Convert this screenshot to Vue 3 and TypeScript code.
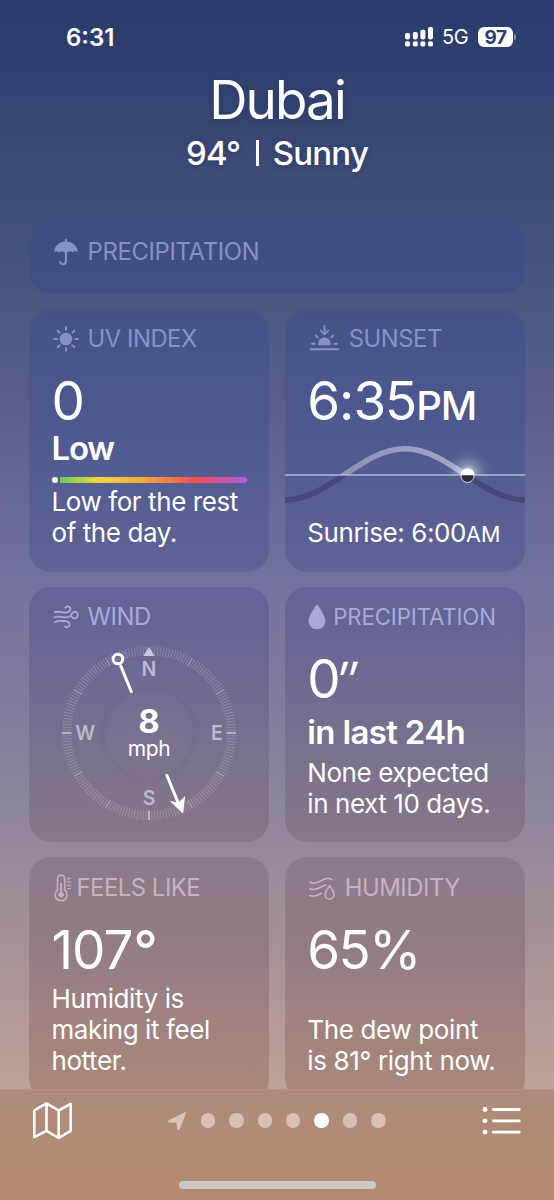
<script setup lang="ts">
interface Tick {
  angle: number
  kind: 'minor' | 'major' | 'cardinal'
}

const ticks: Tick[] = Array.from({ length: 180 }, (_, i) => {
  const angle = i * 2
  if (angle % 90 === 0) return { angle, kind: 'cardinal' as const }
  return { angle, kind: angle % 30 === 0 ? ('major' as const) : ('minor' as const) }
}).filter((t) => t.angle !== 0)

const pages = [0, 1, 2, 3, 4, 5, 6]
const activePage = 4
</script>

<template>
  <div class="screen">
    <main class="scroll">
      <div class="status">
        <span class="time">6:31</span>
        <div class="indicators">
          <svg class="signal" width="29" height="20" viewBox="0 0 29 20" fill="#fff">
            <rect x="0" y="6" width="5" height="6.4" rx="1.8" />
            <rect x="7.8" y="5" width="5" height="7.4" rx="1.8" />
            <rect x="15.4" y="2.7" width="5" height="9.7" rx="1.8" />
            <rect x="23" y="0" width="5" height="12.4" rx="1.8" />
            <rect x="0" y="14.2" width="5" height="5.3" rx="1.8" />
            <rect x="7.8" y="14.2" width="5" height="5.3" rx="1.8" />
            <rect x="15.4" y="14.2" width="5" height="5.3" rx="1.8" />
            <rect x="23" y="14.2" width="5" height="5.3" rx="1.8" />
          </svg>
          <span class="network">5G</span>
          <span class="battery">97</span>
          <span class="cap"></span>
        </div>
      </div>

      <header class="hero">
        <h1>Dubai</h1>
        <p><span class="deg">94°</span><i class="bar"></i><span class="cond">Sunny</span></p>
      </header>

      <div class="cards">
        <section class="card wide">
          <h2 class="label l-precip">
            <svg class="icon" width="26" height="28" viewBox="0 0 26 28">
              <path d="M1 14.6C1 8 6 3.4 12.9 3.4S24.8 8 24.8 14.6c-1.2-1.5-3.7-1.9-5.2-.2-1.4-1.4-3.7-1.4-5 0h-3.4c-1.3-1.4-3.6-1.4-5 0-1.500-1.700-4-1.300-5.200.2z" fill="currentColor" />
              <path d="M12.900 3.500V1.800M12.900 12v11.300c0 4-5.600 4-5.600.4" fill="none" stroke="currentColor" stroke-width="2" stroke-linecap="round" />
            </svg>
            <span>PRECIPITATION</span>
          </h2>
        </section>

        <section class="card">
          <h2 class="label l-uv">
            <svg class="icon" width="26" height="26" viewBox="0 0 26 26">
              <circle cx="13" cy="13" r="6.300" fill="currentColor" />
              <path d="M13 1.200v2.600M13 22.200v2.600M1.200 13h2.600M22.200 13h2.600M4.700 4.700l1.900 1.900M19.400 19.400l1.900 1.900M4.700 21.300l1.900-1.900M19.400 6.600l1.900-1.900" stroke="currentColor" stroke-width="2" stroke-linecap="round" />
            </svg>
            <span>UV INDEX</span>
          </h2>
          <div class="value">0</div>
          <div class="strong s-low">Low</div>
          <div class="uv"><i class="uv-dot"></i><i class="uv-bar"></i></div>
          <p class="body b-uv">Low for the rest<br />of the day.</p>
        </section>

        <section class="card">
          <h2 class="label l-sunset">
            <svg class="icon" width="31" height="28" viewBox="0 0 31 28">
              <path d="M9.400 22.200v-1.600a6.100 6.100 0 0 1 12.200 0v1.600z" fill="currentColor" />
              <path d="M1.500 26.200h28M3 20.800h2.600M25.400 20.800H28M6.800 12.500l1.900 1.900M24.200 12.500l-1.900 1.900M15.500 3v7.800M11.800 7.600l3.700 3.700 3.700-3.700" fill="none" stroke="currentColor" stroke-width="1.900" stroke-linecap="round" stroke-linejoin="round" />
            </svg>
            <span>SUNSET</span>
          </h2>
          <div class="value v-time">6:35<small>PM</small></div>
          <svg class="arc" width="240.250" height="80" viewBox="0 0 240.250 80">
            <defs>
              <clipPath id="day"><rect x="0" y="0" width="183" height="45" /></clipPath>
              <clipPath id="night"><rect x="0" y="45" width="241" height="35" /></clipPath>
              <radialGradient id="glow">
                <stop offset="0" stop-color="#fff" stop-opacity=".8" />
                <stop offset=".4" stop-color="#fff" stop-opacity=".26" />
                <stop offset=".7" stop-color="#fff" stop-opacity=".07" />
                <stop offset="1" stop-color="#fff" stop-opacity="0" />
              </radialGradient>
              <clipPath id="above"><rect x="140" y="0" width="90" height="45" /></clipPath>
              <linearGradient id="dayfill" x1="0" x2="1" y1="0" y2="0">
                <stop offset="0" stop-color="#fff" stop-opacity=".25" />
                <stop offset=".5" stop-color="#fff" stop-opacity=".42" />
                <stop offset="1" stop-color="#fff" stop-opacity=".5" />
              </linearGradient>
            </defs>
            <path class="curve" d="M0 70C43.700 70 76.300 18.800 120 18.800S196.500 70 240.300 70" stroke="#3c3f6e" stroke-opacity=".65" clip-path="url(#night)" />
            <path class="curve" d="M0 70C43.700 70 76.300 18.800 120 18.800S196.500 70 240.300 70" stroke="url(#dayfill)" clip-path="url(#day)" />
            <circle cx="183" cy="43" r="23" fill="url(#glow)" clip-path="url(#above)" />
            <path d="M0 45h241" stroke="#c3c5e2" stroke-opacity=".85" stroke-width="1.300" />
            <circle cx="182.500" cy="46" r="6.500" fill="#2c2c33" stroke="#d9d9e6" stroke-width="1" />
            <path d="M175.500 45.300a7 7 0 0 1 14 0z" fill="#fff" />
          </svg>
          <p class="body b-sunrise">Sunrise: 6:00<small>AM</small></p>
        </section>

        <section class="card">
          <h2 class="label l-wind">
            <svg class="icon" width="26" height="24" viewBox="0 0 26 24" fill="none" stroke="currentColor" stroke-width="1.800" stroke-linecap="round">
              <path d="M1.800 7.300c4-1.800 7.500.8 11.300.3 3.400-.5 4.700-2.300 4.200-4.300-.6-2.400-4-2.600-5-.6" />
              <path d="M1.500 12.200c4-1.900 7 .6 11.600.1 3.400-.4 4.900-1.300 5.400-2.900.8-2.300 3.200-3.300 5-2.100 2.200 1.500 1.700 4.900-.8 5.800-1.700.5-3.200-.1-3.800-1.300" />
              <path d="M1.800 17.300c3.200-1.900 6.500-1.300 10.200-1.200 3.300.2 5 2 4.600 4.100-.4 2.300-3.400 2.800-4.600 1" />
            </svg>
            <span>WIND</span>
          </h2>
          <svg class="compass" width="180" height="180" viewBox="-90 -90 180 180">
            <defs>
              <radialGradient id="disc">
                <stop offset="0" stop-color="#47395a" stop-opacity="0" />
                <stop offset=".78" stop-color="#47395a" stop-opacity=".03" />
                <stop offset=".86" stop-color="#47395a" stop-opacity=".06" />
                <stop offset="1" stop-color="#47395a" stop-opacity="0" />
              </radialGradient>
            </defs>
            <circle r="53" fill="url(#disc)" />
            <circle r="44" fill="#d0b8d8" fill-opacity=".03" />
            <line v-for="t in ticks" :key="t.angle" x1="0" y1="-87" x2="0" y2="-77.500" :class="['tick', t.kind]" :transform="`rotate(${t.angle})`" />
            <path d="M0-86.300L5.700-77H-5.700z" fill="#c9c7da" />
            <g class="dirs">
              <text x="0" y="-57.300">N</text>
              <text x="0" y="71.700">S</text>
              <text x="-63.800" y="7.300">W</text>
              <text x="68" y="7.300">E</text>
            </g>
            <g stroke="#fff" fill="none">
              <path d="M-17.300-40.200L-28.600-68" stroke-width="3" />
              <circle cx="-31.100" cy="-74" r="4.800" stroke-width="3" />
              <path d="M17.400 41.200L29.500 70.500" stroke-width="3" />
            </g>
            <path d="M34 80.600L20.800 67.900 29.500 69.500 36.200 63z" fill="#fff" />
            <text class="speed" x="0" y="-.3">8</text>
            <text class="unit" x="0" y="22.700">mph</text>
          </svg>
        </section>

        <section class="card">
          <h2 class="label l-rain">
            <svg class="icon" width="18" height="26" viewBox="0 0 18 26">
              <path d="M9 .8c.5 0 .8.400 1.100.8C12.600 6 17.400 12 17.400 16.700c0 5-3.500 8.500-8.400 8.500S.6 21.700.6 16.700C.6 12 5.400 6 7.900 1.600c.3-.4.6-.8 1.100-.8z" fill="currentColor" />
            </svg>
            <span>PRECIPITATION</span>
          </h2>
          <div class="value v-rain">0<span class="inch">″</span></div>
          <div class="strong s-rain">in last 24h</div>
          <p class="body b-rain">None expected<br />in next 10 days.</p>
        </section>

        <section class="card tall">
          <h2 class="label l-feels">
            <svg class="icon" width="18" height="28" viewBox="0 0 18 28" fill="none" stroke="currentColor" stroke-linecap="round">
              <path d="M3.500 16V4.700a3.600 3.600 0 0 1 7.200 0V16a6 6 0 1 1-7.200 0z" stroke-width="1.600" />
              <path d="M7.100 20.500V10" stroke-width="2" />
              <circle cx="7.100" cy="20.800" r="2.300" fill="currentColor" stroke-width="1" />
              <path d="M13.600 4.500h2.700M13.600 7.900h2.700M13.600 11.300h2.700M13.600 14.700h2.700" stroke-width="1.300" />
            </svg>
            <span>FEELS LIKE</span>
          </h2>
          <div class="value v-feels">107<span class="ring">°</span></div>
          <p class="body b-feels">Humidity is<br />making it feel<br />hotter.</p>
        </section>

        <section class="card tall">
          <h2 class="label l-hum">
            <svg class="icon" width="28" height="24" viewBox="0 0 28 24" fill="none" stroke="currentColor" stroke-width="1.700" stroke-linecap="round" stroke-linejoin="round">
              <path d="M2 6.200c5 2.300 8.500.300 12-1.900 3.400-2.100 6.500-2.600 9.600-.8" />
              <path d="M2 12.900c4 1.500 7.300.300 10.500-1.600 2-1.200 3.500-2 5.300-2.200" />
              <path d="M2 19.500c3.700 1.500 7 .6 11.500-2.200" />
              <path d="M21.600 9.600c1.700 3.200 4.500 6 4.500 8.900a4.500 4.500 0 0 1-9 0c0-2.900 2.800-5.700 4.500-8.900z" />
            </svg>
            <span>HUMIDITY</span>
          </h2>
          <div class="value v-hum">65%</div>
          <p class="body b-hum">The dew point<br />is 81° right now.</p>
        </section>
      </div>
    </main>

    <footer class="toolbar">
      <div class="nav">
        <svg class="map" width="42" height="42" viewBox="0 0 42 42" fill="none" stroke="#fff" stroke-width="2.600" stroke-linejoin="round">
          <path d="M3.300 10.300L15.500 3.300l12.200 7.200 12-6.700v27L27.700 38 15.500 30.800 3.300 37.200zM15.500 3.300v27.500M27.700 10.500V38" />
        </svg>
        <div class="pager">
          <svg class="here" width="20" height="20" viewBox="0 0 20 20">
            <path d="M17.700 1.200c1-.4 1.700.3 1.300 1.300l-6.400 15.800c-.5 1.200-2 1-2.200-.3l-1.100-6.500-7.500-.1c-1.400 0-1.500-1.500-.3-2z" fill="#dbc5bc" />
          </svg>
          <i v-for="p in pages" :key="p" :class="['dot', { on: p === activePage }]"></i>
        </div>
        <svg class="list" width="40" height="30" viewBox="0 0 40 30" fill="#fff">
          <circle cx="4" cy="3.500" r="2.400" /><circle cx="4" cy="14.800" r="2.400" /><circle cx="4" cy="26.100" r="2.400" />
          <rect x="11" y="2.100" width="28.600" height="2.800" rx="1.300" />
          <rect x="11" y="13.400" width="28.600" height="2.800" rx="1.300" />
          <rect x="11" y="24.700" width="28.600" height="2.800" rx="1.300" />
        </svg>
      </div>
      <div class="home"></div>
    </footer>
  </div>
</template>

<style>
body {
  margin: 0;
}
</style>

<style scoped>
.screen {
  width: 554px;
  height: 1200px;
  overflow: hidden;
  color: #fff;
  font-family: Inter, "Liberation Sans", sans-serif;
  background: linear-gradient(180deg, #283b6b 0, #3e4c78 190px, #4b5683 300px, #5f6391 450px, #70739d 580px, #807c9c 700px, #94889b 850px, #a89494 960px, #bda298 1089px);
}
.scroll {
  height: 1089px;
  overflow: hidden;
}
.status {
  display: flex;
  justify-content: space-between;
  padding: 27px 38px 0 66px;
  height: 20px;
  line-height: 21px;
}
.time {
  font-size: 24px;
  font-weight: 600;
  letter-spacing: 0;
}
.indicators {
  display: flex;
  align-items: center;
}
.network {
  margin-left: 8px;
  width: 36px;
  font-size: 20px;
  line-height: 22px;
  letter-spacing: -0.5px;
}
.battery {
  width: 35px;
  height: 20px;
  border-radius: 6px;
  background: #fff;
  color: #2c3e6e;
  font-size: 19px;
  line-height: 21px;
  font-weight: 700;
  text-align: center;
  letter-spacing: -0.6px;
}
.cap {
  width: 2px;
  height: 6px;
  margin-left: 1px;
  border-radius: 0 3px 3px 0;
  background: #8b96b3;
}
.hero {
  height: 172.5px;
  text-align: center;
  text-shadow: 0 1px 6px rgba(20, 30, 70, 0.28);
}
h1 {
  margin: 0;
  padding-top: 23px;
  font-size: 53px;
  line-height: 60px;
  font-weight: 400;
  letter-spacing: -1.9px;
}
.hero p {
  display: flex;
  justify-content: center;
  align-items: center;
  margin: 4.500px 0 0;
  height: 36px;
  font-size: 33px;
  font-weight: 500;
  letter-spacing: -0.8px;
}
.bar {
  width: 2.500px;
  height: 26px;
  margin: 0 14px 0 16px;
  background: #fff;
}
.cards {
  display: grid;
  grid-template-columns: 240.25px 240.25px;
  grid-template-rows: 74px 263px 255px 244px;
  gap: 15px 15.5px;
  padding: 0 29px;
}
.card {
  box-sizing: border-box;
  padding: 18px 0 0 22.500px;
  border-radius: 22px;
  overflow: hidden;
  background: linear-gradient(180deg, #445287 0, #4f5a90 50%, #606396 100%);
  box-shadow: inset 0 0 0 1px rgba(255, 255, 255, 0.015);
}
.card:nth-child(4),
.card:nth-child(5) {
  background: linear-gradient(180deg, #626398 0, #666795 20%, #716d90 45%, #7c728c 70%, #867788 100%);
}
.card.tall {
  background: linear-gradient(180deg, #8a7a8b 0, #937c83 40%, #9f8280 62%, #a8877a 95%);
}
.card.wide {
  grid-column: 1 / 3;
  padding-top: 20px;
  background: linear-gradient(180deg, #3d4c82, #414f85);
}
.label {
  display: flex;
  align-items: center;
  height: 24px;
  margin: 0;
  color: #8791c8;
  font-size: 23.800px;
  font-weight: 400;
  line-height: 24px;
  letter-spacing: -0.45px;
  white-space: nowrap;
}
.icon {
  flex: none;
}
.l-precip { letter-spacing: -0.3px; }
.l-precip .icon { margin-right: 9px; margin-left: 1px; }
.l-uv .icon { margin-right: 9px; margin-left: 1px; }
.l-sunset .icon { margin: -4px 9px 0 1.500px; }
.l-wind, .l-rain { color: #a9a9db; }
.l-wind .icon { margin-right: 9px; margin-left: 1px; }
.l-rain { font-size: 22.200px; letter-spacing: -0.1px; }
.l-rain .icon { margin-right: 7px; margin-left: 1px; }
.l-feels, .l-hum { color: #c6b2c2; }
.l-feels { height: 26px; margin-bottom: -2px; }
.l-feels .icon { margin-right: 5px; margin-left: 2px; }
.l-hum { height: 26px; margin-bottom: -2px; }
.l-hum .icon { margin-right: 8.500px; margin-left: 1px; }
.value {
  height: 50px;
  margin-top: 25px;
  font-size: 53px;
  line-height: 50px;
  font-weight: 400;
  letter-spacing: -1px;
  white-space: nowrap;
}
.value small {
  font-size: 40px;
  font-weight: 500;
  letter-spacing: -1.3px;
}
.inch {
  display: inline-block;
  margin-left: -2px;
  font-size: 50px;
  font-weight: 500;
  letter-spacing: -1px;
  transform: skewX(-10deg) scaleX(0.82);
  transform-origin: 0 20px;
}
.ring {
  margin-left: 1px;
  font-weight: 500;
}
.v-hum {
  letter-spacing: -1.6px;
}
.tall .value {
  margin-top: 26px;
}
.strong {
  height: 36px;
  margin-top: 4.500px;
  font-size: 33px;
  line-height: 36px;
  font-weight: 600;
  letter-spacing: -0.65px;
}
.s-low { letter-spacing: -1.2px; }
.s-rain { margin-top: 10.500px; }
.body {
  margin: 0;
  font-size: 26px;
  line-height: 31.200px;
  font-weight: 400;
  letter-spacing: -0.42px;
  white-space: nowrap;
}
.body small {
  font-size: 21.500px;
  letter-spacing: 0;
}
.b-sunrise {
  letter-spacing: -0.4px;
}
.uv {
  display: flex;
  align-items: center;
  height: 6px;
  margin: 10.500px 0 3.500px;
}
.uv-dot {
  width: 6px;
  height: 6px;
  margin-right: 2px;
  border-radius: 50%;
  background: #fff;
}
.uv-bar {
  width: 187.500px;
  height: 6px;
  border-radius: 0 3px 3px 0;
  background: linear-gradient(90deg, #6fcb55 0, #f0d640 21%, #f3a43c 46%, #ee4f58 72%, #b25be0 100%);
}
.arc {
  display: block;
  margin: 4px 0 7.500px -22.500px;
}
.curve {
  fill: none;
  stroke-width: 5.500;
}
.b-rain { margin-top: 6.500px; }
.b-feels { margin-top: 8px; }
.b-hum { margin-top: 39px; letter-spacing: -0.35px; }
.compass {
  display: block;
  margin: 14.500px 0 0 7.500px;
}
.tick {
  stroke: #fff;
  stroke-opacity: 0.2;
  stroke-width: 1;
}
.tick.major {
  stroke-opacity: 0.36;
  stroke-width: 1.100;
}
.tick.cardinal {
  stroke-opacity: 0.62;
  stroke-width: 1.500;
}
.compass text {
  fill: #fff;
  text-anchor: middle;
}
.compass .dirs text {
  fill: #bfb9d0;
  font-size: 19.500px;
  font-weight: 600;
}
.compass .speed {
  font-size: 33px;
  font-weight: 700;
}
.compass .unit {
  font-size: 21px;
  letter-spacing: -0.4px;
}
.toolbar {
  height: 111px;
  background: linear-gradient(180deg, #ad8a7b 0, #b18c76 50%, #b68c70 100%);
  box-shadow: inset 0 1px 0 rgba(200, 150, 130, 0.4);
}
.nav {
  display: flex;
  align-items: center;
  justify-content: space-between;
  height: 63px;
  padding: 0 33px 0 31px;
}
.pager {
  display: flex;
  align-items: center;
  margin-right: 1.500px;
}
.here {
  margin-right: 14px;
}
.dot {
  width: 14.400px;
  height: 14.400px;
  margin-right: 14px;
  border-radius: 50%;
  background: #d7c1b7;
}
.dot:last-child {
  margin-right: 0;
}
.dot.on {
  background: #fff;
}
.home {
  width: 197px;
  height: 8px;
  margin: 29px auto 0;
  border-radius: 4px;
  background: #c9c9c7;
}
</style>
